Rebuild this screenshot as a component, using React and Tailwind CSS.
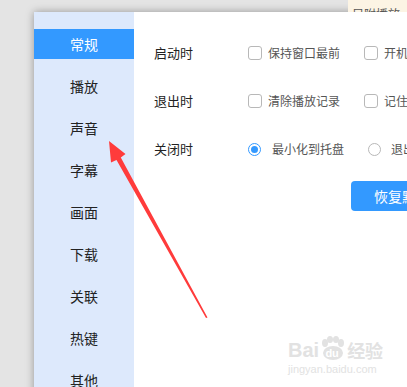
import React from "react";

const font = { fontFamily: '"Noto Sans CJK SC", "Noto Sans", sans-serif' };

const navItems = ["常规", "播放", "声音", "字幕", "画面", "下载", "关联", "热键", "其他"];

function Checkbox() {
  return <span className="block w-[14px] h-[14px] rounded-[3px] border border-[#b8b8b8] bg-white shrink-0" />;
}

function Radio({ on }) {
  return on ? (
    <span className="flex items-center justify-center w-[13px] h-[13px] rounded-full border border-[#3399ff] bg-white shrink-0">
      <span className="block w-[7px] h-[7px] rounded-full bg-[#3399ff]" />
    </span>
  ) : (
    <span className="block w-[13px] h-[13px] rounded-full border border-[#b8b8b8] bg-white shrink-0" />
  );
}

function Row({ label, children }) {
  return (
    <div className="flex items-center h-[24px]">
      <div className="w-[94px] shrink-0 text-[13px] text-[#222]">{label}</div>
      {children}
    </div>
  );
}

export default function App() {
  return (
    <div className="relative w-[407px] h-[387px] overflow-hidden bg-[#e4e4e4]" style={font}>
      <div className="flex justify-end h-[12px]">
        <div className="w-[59px] h-[12px] bg-[#fcf4e4] overflow-hidden">
          <div className="mt-[8px] ml-[4px] text-[12px] leading-[12px] text-[#555] whitespace-nowrap">另附播放</div>
        </div>
      </div>
      <div className="ml-[34px] w-[420px] h-[400px] flex bg-white shadow-[0_0_8px_rgba(0,0,0,0.35)]">
        <div className="w-[100px] shrink-0 bg-[#dde9fc] pt-[17px] flex flex-col gap-[12px]">
          {navItems.map((t, i) => (
            <div
              key={t}
              className={
                i === 0
                  ? "h-[30px] flex items-center justify-center bg-[#3399ff] text-white text-[14px]"
                  : "h-[30px] flex items-center justify-center text-[#222] text-[14px]"
              }
            >
              {t}
            </div>
          ))}
        </div>
        <div className="flex-1 pl-[20px] pt-[29px] flex flex-col gap-[24px]">
          <Row label="启动时">
            <div className="w-[116px] flex items-center gap-[6px] shrink-0">
              <Checkbox />
              <span className="text-[12px] text-[#555] whitespace-nowrap">保持窗口最前</span>
            </div>
            <div className="flex items-center gap-[6px] shrink-0">
              <Checkbox />
              <span className="text-[12px] text-[#555] whitespace-nowrap">开机启动</span>
            </div>
          </Row>
          <Row label="退出时">
            <div className="w-[116px] flex items-center gap-[6px] shrink-0">
              <Checkbox />
              <span className="text-[12px] text-[#555] whitespace-nowrap">清除播放记录</span>
            </div>
            <div className="flex items-center gap-[6px] shrink-0">
              <Checkbox />
              <span className="text-[12px] text-[#555] whitespace-nowrap">记住位置</span>
            </div>
          </Row>
          <Row label="关闭时">
            <div className="w-[120px] flex items-center gap-[11px] shrink-0">
              <Radio on />
              <span className="text-[12px] text-[#555] whitespace-nowrap">最小化到托盘</span>
            </div>
            <div className="flex items-center gap-[10px] shrink-0">
              <Radio />
              <span className="text-[12px] text-[#555] whitespace-nowrap">退出程序</span>
            </div>
          </Row>
          <div className="pl-[197px] -mt-[4px]">
            <div className="w-[100px] h-[30px] rounded-[4px] bg-[#3399ff] text-white text-[14px] flex items-center pl-[23px] whitespace-nowrap">
              恢复默认
            </div>
          </div>
        </div>
      </div>

      <svg className="absolute left-0 top-0" width="407" height="387" viewBox="0 0 407 387">
        <polygon
          points="109,141 125.5,154 120.8,157.5 207.5,317.5 206,318 116.5,160 111,162.5"
          fill="#ff3b3b"
        />
      </svg>

      <div className="absolute left-[288px] top-[334px] flex flex-col items-start text-[#e2e2e2]">
        <div className="flex items-end h-[26px]">
          <span className="text-[20px] leading-[20px] font-bold" style={{ fontFamily: '"Liberation Sans", sans-serif' }}>Bai</span>
          <span className="relative w-[26px] h-[24px] flex items-end justify-center">
            <svg className="absolute left-0 top-0" width="26" height="24" viewBox="0 0 26 24">
              <ellipse cx="6" cy="7" rx="3" ry="4" fill="#e2e2e2" />
              <ellipse cx="11" cy="3.5" rx="3" ry="3.5" fill="#e2e2e2" />
              <ellipse cx="17" cy="3.5" rx="3" ry="3.5" fill="#e2e2e2" />
              <ellipse cx="22" cy="7" rx="3" ry="4" fill="#e2e2e2" />
              <ellipse cx="14" cy="17" rx="10" ry="7" fill="#e2e2e2" />
            </svg>
            <span className="relative text-white text-[11px] leading-[14px] font-bold" style={{ fontFamily: '"Liberation Sans", sans-serif' }}>du</span>
          </span>
          <span className="text-[18px] leading-[20px] font-bold ml-[2px]">经验</span>
        </div>
        <div className="text-[11px] leading-[14px] mt-[2px]" style={{ fontFamily: '"Liberation Sans", sans-serif' }}>jingyan.baidu.com</div>
      </div>
    </div>
  );
}
